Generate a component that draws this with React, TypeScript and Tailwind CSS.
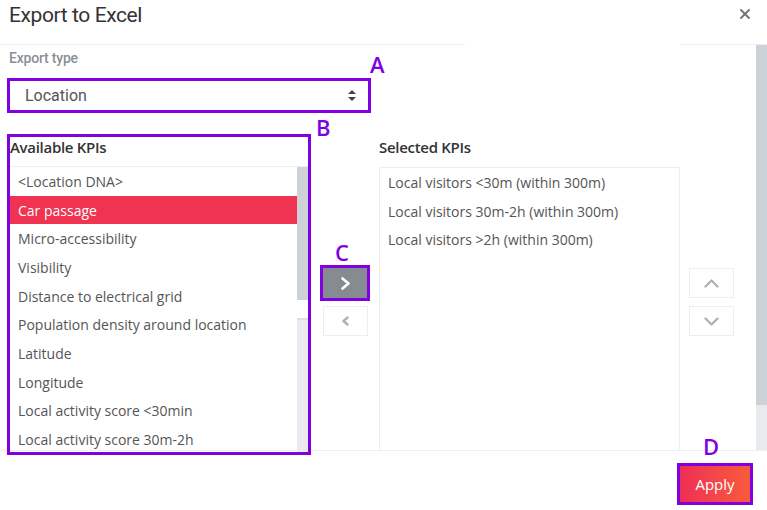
import { X } from "lucide-react";

const available = [
  "<Location DNA>",
  "Car passage",
  "Micro-accessibility",
  "Visibility",
  "Distance to electrical grid",
  "Population density around location",
  "Latitude",
  "Longitude",
  "Local activity score <30min",
  "Local activity score 30m-2h",
];

const selected = [
  "Local visitors <30m (within 300m)",
  "Local visitors 30m-2h (within 300m)",
  "Local visitors >2h (within 300m)",
];

function Tag({ letter, className }: { letter: string; className: string }) {
  return (
    <span
      className={`absolute text-[22px] leading-none font-semibold text-[#8000e0] ${className}`}
      style={{ fontFamily: "'Open Sans', sans-serif" }}
    >
      {letter}
    </span>
  );
}

// simple chevron: dir decides which way the tip points
function Chevron({ dir, color, w, h, sw }: { dir: "l" | "r" | "u" | "d"; color: string; w: number; h: number; sw: number }) {
  const d = {
    r: `M1.5 1.5 L${w - 1.5} ${h / 2} L1.5 ${h - 1.5}`,
    l: `M${w - 1.5} 1.5 L1.5 ${h / 2} L${w - 1.5} ${h - 1.5}`,
    u: `M1.5 ${h - 1.5} L${w / 2} 1.5 L${w - 1.5} ${h - 1.5}`,
    d: `M1.5 1.5 L${w / 2} ${h - 1.5} L${w - 1.5} 1.5`,
  }[dir];
  return (
    <svg width={w} height={h} viewBox={`0 0 ${w} ${h}`}>
      <path d={d} fill="none" stroke={color} strokeWidth={sw} strokeLinecap="round" strokeLinejoin="round" />
    </svg>
  );
}

export default function App() {
  return (
    <div
      className="relative w-[767px] h-[510px] overflow-hidden bg-white"
      style={{ fontFamily: "'Open Sans', 'Liberation Sans', sans-serif" }}
    >
      {/* header */}
      <div className="h-[44px] flex items-start justify-between pl-[9px] pr-[14px] pt-[2px]">
        <h1 className="text-[21px] leading-[26px] text-[#333] tracking-[-0.4px]" style={{ fontFamily: "Roboto, sans-serif" }}>
          Export to Excel
        </h1>
        <X className="w-[16px] h-[16px] mt-[4px] text-[#777]" strokeWidth={3} />
      </div>
      <div className="flex h-px">
        <div className="w-[465px] bg-[#eceef0]" />
        <div className="w-[215px]" />
        <div className="flex-1 bg-[#eceef0]" />
      </div>

      {/* body */}
      <div className="flex h-[405px]">
        <div className="flex-1 pl-[7px]">
          <div className="pl-[2px] pt-[3px] h-[33px] text-[14px] font-medium text-[#8a8f96] tracking-[-0.2px]" style={{ fontFamily: "Roboto, sans-serif" }}>
            Export type
          </div>
          <div className="relative w-[364px] h-[35px] border-[3px] border-[#8000e0] flex items-center justify-between pl-[15px] pr-[12px]">
            <span className="text-[16px] text-[#555]" style={{ fontFamily: "Roboto, sans-serif" }}>
              Location
            </span>
            <svg width="8" height="11" viewBox="0 0 8 11">
              <path d="M4 0 L8 4 L0 4 Z" fill="#444" />
              <path d="M0 7 L8 7 L4 11 Z" fill="#444" />
            </svg>
          </div>

          <div className="flex mt-[21px] gap-[9px]">
            {/* available */}
            <div className="relative w-[304px] h-[321px] border-[3px] border-[#8000e0] flex flex-col">
              <div className="h-[29px] text-[15px] font-semibold text-[#333] leading-[20px] tracking-[-0.3px]">
                Available KPIs
              </div>
              <div className="flex-1 flex border-t border-[#eceef0] overflow-hidden">
                <div className="flex-1">
                  {available.map((k, i) => (
                    <div
                      key={k}
                      className={`h-[28.7px] flex items-center pl-[8px] text-[14px] ${
                        i === 1 ? "bg-[#ef3350] text-white" : "text-[#555]"
                      }`}
                    >
                      {k}
                    </div>
                  ))}
                </div>
                <div className="w-[11px] flex flex-col">
                  <div className="h-[133px] bg-[#cdd2d9]" />
                  <div className="h-[18px] bg-white" />
                  <div className="flex-1 bg-[#e9ebee] border-t-2 border-[#dcdfe3]" />
                </div>
              </div>
            </div>

            {/* move buttons */}
            <div className="w-[50px] pt-[131px] flex flex-col items-center">
              <div className="w-[50px] h-[36px] border-[3px] border-[#8000e0] bg-[#858b90] flex items-center justify-center">
                <Chevron dir="r" color="#fff" w={9} h={13} sw={2.6} />
              </div>
              <div className="mt-[5px] w-[45px] h-[30px] border border-[#eceef0] bg-white flex items-center justify-center">
                <Chevron dir="l" color="#aeb2b6" w={7} h={10} sw={2.4} />
              </div>
            </div>

            {/* selected */}
            <div className="w-[301px] flex flex-col">
              <div className="h-[33px] pt-[3px] text-[15px] font-semibold text-[#333] leading-[20px] tracking-[-0.3px]">
                Selected KPIs
              </div>
              <div className="h-[283px] border border-b-0 border-[#eceef0]">
                {selected.map((k) => (
                  <div key={k} className="h-[28.7px] flex items-center pl-[8px] text-[14px] text-[#555]">
                    {k}
                  </div>
                ))}
              </div>
            </div>

            {/* order buttons */}
            <div className="pt-[134px] flex flex-col gap-[8px]">
              <div className="w-[45px] h-[30px] border border-[#eceef0] flex items-center justify-center">
                <Chevron dir="u" color="#aeb2b6" w={15} h={9} sw={2.4} />
              </div>
              <div className="w-[45px] h-[30px] border border-[#eceef0] flex items-center justify-center">
                <Chevron dir="d" color="#aeb2b6" w={15} h={9} sw={2.4} />
              </div>
            </div>
          </div>
        </div>

        {/* page scrollbar */}
        <div className="w-[11px] flex flex-col">
          <div className="h-[360px] bg-[#cdd2d9]" />
          <div className="flex-1 bg-[#e8eaed]" />
        </div>
      </div>

      {/* footer */}
      <div className="border-t border-[#eceef0] h-[60px] flex justify-end items-start pt-[12px] pr-[14px]">
        <div className="border-[3px] border-[#8000e0]">
          <button className="w-[70px] h-[36px] bg-gradient-to-r from-[#ee2d55] to-[#f85a3a] text-white text-[15px]">
            Apply
          </button>
        </div>
      </div>

      <Tag letter="A" className="left-[370px] top-[53px]" />
      <Tag letter="B" className="left-[316px] top-[116px]" />
      <Tag letter="C" className="left-[335px] top-[241px]" />
      <Tag letter="D" className="left-[703px] top-[435px]" />
    </div>
  );
}
